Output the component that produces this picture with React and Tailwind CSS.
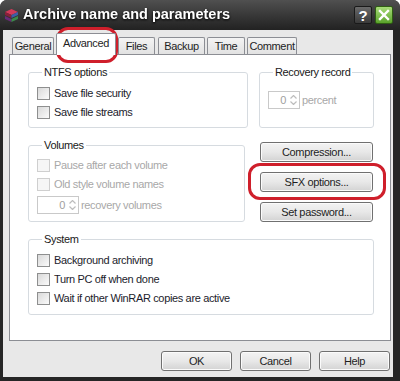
import React from 'react';

const Check = ({ label, disabled }) => (
  <div className="flex items-center h-[19px] gap-[4px]">
    <span
      className={`w-[13px] h-[13px] border ${
        disabled
          ? 'border-[#cfcfcf] bg-[#f6f6f6]'
          : 'border-[#8e8f8f] bg-linear-to-br from-[#d9d9d9] to-[#fbfbfb]'
      }`}
    />
    <span className={disabled ? 'text-[#a8a8a8]' : 'text-[#1c1c2c]'}>{label}</span>
  </div>
);

const Spin = ({ w }) => (
  <div className={`flex items-center h-[18px] border border-[#c9c9c9] bg-white ${w}`}>
    <span className="flex-1 text-right pr-[2px] text-[#a0a0a0]">0</span>
    <span className="flex flex-col items-center justify-center w-[11px] h-full gap-[2px] pr-[1px]">
      <svg width="7" height="4" viewBox="0 0 7 4">
        <path d="M0.5 3.5 L3.5 0.5 L6.5 3.5" fill="none" stroke="#bdbdbd" strokeWidth="1.2" />
      </svg>
      <svg width="7" height="4" viewBox="0 0 7 4">
        <path d="M0.5 0.5 L3.5 3.5 L6.5 0.5" fill="none" stroke="#bdbdbd" strokeWidth="1.2" />
      </svg>
    </span>
  </div>
);

const Btn = ({ children, className = '' }) => (
  <button
    className={`h-[20px] border border-[#707070] rounded-[3px] bg-linear-to-b from-[#f3f3f3] via-[#e8e8e8] to-[#d3d3d3] shadow-[inset_0_0_0_1px_#fbfbfb] text-[#1e1e1e] leading-none ${className}`}
  >
    {children}
  </button>
);

const Group = ({ title, className = '', children }) => (
  <fieldset className={`border border-[#d6dbe0] rounded-[3px] ${className}`}>
    <legend className="ml-[5px] px-[2px] leading-[13px] text-[#202020]">{title}</legend>
    {children}
  </fieldset>
);

const tabs = [
  { name: 'General', w: 'w-[42px]' },
  { name: 'Advanced', w: 'w-[60px]', active: true },
  { name: 'Files', w: 'w-[37px]' },
  { name: 'Backup', w: 'w-[47px] ml-px' },
  { name: 'Time', w: 'w-[38px]' },
  { name: 'Comment', w: 'w-[50px]' },
];

const App = () => {
  return (
    <div className="relative w-[400px] h-[381px] bg-[#262626] rounded-t-[7px] flex flex-col font-['Liberation_Sans',Arial,sans-serif] text-[11px] tracking-[-0.35px] overflow-hidden">
      {/* title bar */}
      <div className="h-[30px] flex items-center pl-[4px] pr-[7px] bg-linear-to-b from-[#505050] to-[#222222]">
        <svg width="15" height="15" viewBox="0 0 15 15">
          <polygon points="7.5,1 14,4 7.5,7 1,4" fill="#d23a5a" />
          <polygon points="1,4 7.5,7 7.5,10 1,7" fill="#8a1f3a" />
          <polygon points="14,4 7.5,7 7.5,10 14,7" fill="#3d5fa8" />
          <polygon points="1,8 7.5,11 7.5,14 1,11" fill="#6a2a7a" />
          <polygon points="14,8 7.5,11 7.5,14 14,11" fill="#3a8a4a" />
        </svg>
        <span className="ml-[4px] text-white font-bold text-[14.5px] tracking-normal drop-shadow-[0_1px_1px_#000]">
          Archive name and parameters
        </span>
        <div className="ml-auto flex gap-[3px]">
          <div className="w-[18px] h-[18px] rounded-[2px] border border-[#1a1a1a] bg-linear-to-b from-[#6a6a6a] to-[#3a3a3a] flex items-center justify-center text-white font-bold text-[15px] leading-none">
            ?
          </div>
          <div className="w-[18px] h-[18px] rounded-[2px] border border-[#2f5f12] bg-linear-to-b from-[#a8dc78] to-[#5aa32a] flex items-center justify-center">
            <svg width="12" height="12" viewBox="0 0 12 12">
              <path d="M2 2 L10 10 M10 2 L2 10" stroke="#fff" strokeWidth="2.4" strokeLinecap="square" />
            </svg>
          </div>
        </div>
      </div>

      {/* body */}
      <div className="flex-1 ml-[3px] mr-[7px] mb-[4px] bg-[#e8e8e8] pl-[6px] pr-[2px] pt-[3px] flex flex-col">
        <div className="flex items-end h-[21px] pl-[3px] gap-[2px]">
          {tabs.map(t => (
            <div
              key={t.name}
              className={`${t.w} flex items-center justify-center border border-b-0 border-[#8c8e94] rounded-t-[2px] ${
                t.active
                  ? 'h-[22px] -mb-px bg-white relative z-10 pb-[3px]'
                  : 'h-[17px] bg-linear-to-b from-[#f4f4f4] to-[#e2e2e2]'
              } text-[#1e1e1e]`}
            >
              {t.name}
            </div>
          ))}
        </div>

        <div className="h-[287px] border border-[#8c8e94] bg-white pl-[18px] pt-[11px]">
          <div className="flex gap-[11px]">
            <Group title="NTFS options" className="w-[220px] h-[62px] pl-[8px]">
              <div className="pt-[5px]">
                <Check label="Save file security" />
                <Check label="Save file streams" />
              </div>
            </Group>
            <Group title="Recovery record" className="w-[115px] h-[62px] pl-[8px]">
              <div className="flex items-center gap-[2px] mt-[12px]">
                <Spin w="w-[32px]" />
                <span className="text-[#a8a8a8]">percent</span>
              </div>
            </Group>
          </div>

          <div className="flex gap-[15px] mt-[11px]">
            <Group title="Volumes" className="w-[217px] h-[83px] pl-[8px]">
              <div className="pt-[4px]">
                <Check label="Pause after each volume" disabled />
                <Check label="Old style volume names" disabled />
                <div className="flex items-center h-[22px] gap-[2px]">
                  <Spin w="w-[42px]" />
                  <span className="text-[#a8a8a8]">recovery volumes</span>
                </div>
              </div>
            </Group>
            <div className="flex flex-col gap-[10px] pt-[3px]">
              <Btn className="w-[113px]">Compression...</Btn>
              <Btn className="w-[113px]">SFX options...</Btn>
              <Btn className="w-[113px]">Set password...</Btn>
            </div>
          </div>

          <Group title="System" className="w-[346px] h-[82px] pl-[8px] mt-[11px]">
            <div className="pt-[5px]">
              <Check label="Background archiving" />
              <Check label="Turn PC off when done" />
              <Check label="Wait if other WinRAR copies are active" />
            </div>
          </Group>
        </div>

        <div className="flex justify-end gap-[8px] pt-[10px] pr-[1px]">
          <Btn className="w-[71px] border-[#3c3c3c]">OK</Btn>
          <Btn className="w-[71px]">Cancel</Btn>
          <Btn className="w-[71px]">Help</Btn>
        </div>
      </div>

      {/* red annotation marks */}
      <div className="absolute left-[56px] top-[27px] w-[62px] h-[36px] border-[3px] border-[#cf1f2b] rounded-[12px]" />
      <div className="absolute left-[248px] top-[163px] w-[138px] h-[37px] border-[3px] border-[#cf1f2b] rounded-[12px]" />
    </div>
  );
};

export default App;
